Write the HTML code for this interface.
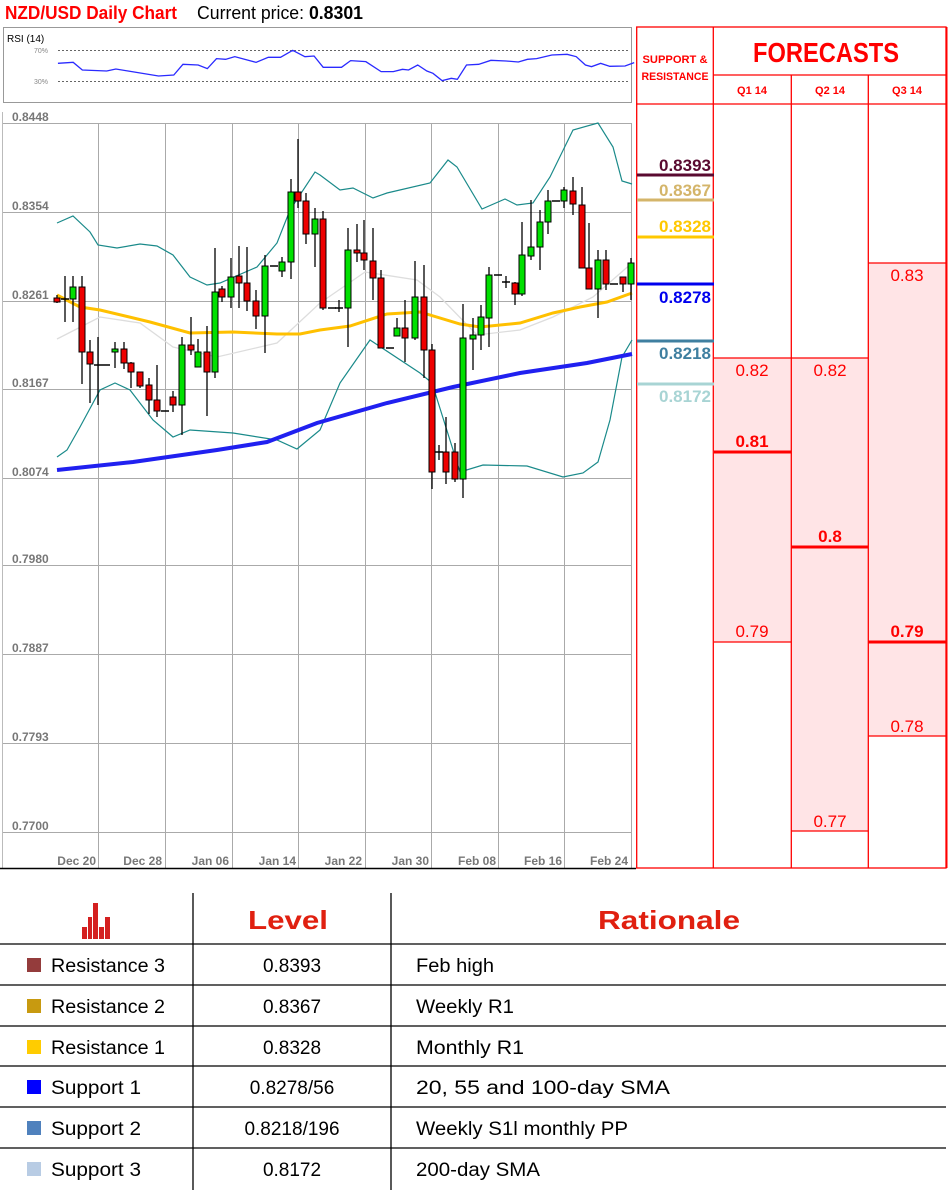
<!DOCTYPE html>
<html><head><meta charset="utf-8"><style>
html,body{margin:0;padding:0;background:#fff}
svg{display:block}
text{font-family:"Liberation Sans Narrow","Liberation Sans",sans-serif}
.ax{fill:#777;font-size:12px;font-weight:bold}
.tb{fill:#000;font-size:19px;font-family:"Liberation Sans",sans-serif}
.fr{fill:#f00;font-size:17px;font-family:"Liberation Sans",sans-serif}
</style></head><body>
<svg width="952" height="1190" viewBox="0 0 952 1190" xmlns="http://www.w3.org/2000/svg">
<text x="5" y="19" font-size="18" font-weight="bold" fill="#f00" textLength="172" lengthAdjust="spacingAndGlyphs">NZD/USD Daily Chart</text>
<text x="197" y="19" font-size="18" fill="#000" textLength="166" lengthAdjust="spacingAndGlyphs">Current price: <tspan font-weight="bold">0.8301</tspan></text>

<rect x="3.5" y="27.5" width="628" height="75" fill="#fff" stroke="#999"/>
<text x="7" y="42" font-size="10" fill="#000">RSI (14)</text>
<text x="34" y="53" font-size="7" fill="#888">70%</text>
<text x="34" y="84" font-size="7" fill="#888">30%</text>
<line x1="58" y1="50.5" x2="630" y2="50.5" stroke="#666" stroke-dasharray="2,2"/>
<line x1="58" y1="81.5" x2="630" y2="81.5" stroke="#666" stroke-dasharray="2,2"/>
<polyline fill="none" stroke="#2a2aff" stroke-width="1.3" transform="scale(0.6098,0.3333)" vector-effect="non-scaling-stroke" points="95,190 120,187 135,210 175,213 190,207 210,213 260,228 285,225 300,193 325,195 340,206 355,176 370,178 385,170 420,187 440,172 460,172 480,151 500,170 515,168 530,202 560,202 575,182 600,185 625,215 645,215 660,208 670,210 685,195 700,213 710,220 725,242 740,235 750,238 765,195 785,193 805,181 830,183 850,186 865,178 880,176 905,165 930,163 945,170 960,195 970,200 985,190 1000,199 1025,198 1040,188"/>

<line x1="2.5" y1="112" x2="2.5" y2="868" stroke="#bbb"/>
<g stroke="#aaa" stroke-width="1">
<line x1="3" y1="123.5" x2="632" y2="123.5"/>
<line x1="3" y1="212.5" x2="632" y2="212.5"/>
<line x1="3" y1="301.5" x2="632" y2="301.5"/>
<line x1="3" y1="389.5" x2="632" y2="389.5"/>
<line x1="3" y1="478.5" x2="632" y2="478.5"/>
<line x1="3" y1="565.5" x2="632" y2="565.5"/>
<line x1="3" y1="654.5" x2="632" y2="654.5"/>
<line x1="3" y1="743.5" x2="632" y2="743.5"/>
<line x1="3" y1="832.5" x2="632" y2="832.5"/>
<line x1="98.5" y1="123" x2="98.5" y2="868"/>
<line x1="165.5" y1="123" x2="165.5" y2="868"/>
<line x1="232.5" y1="123" x2="232.5" y2="868"/>
<line x1="298.5" y1="123" x2="298.5" y2="868"/>
<line x1="365.5" y1="123" x2="365.5" y2="868"/>
<line x1="431.5" y1="123" x2="431.5" y2="868"/>
<line x1="498.5" y1="123" x2="498.5" y2="868"/>
<line x1="564.5" y1="123" x2="564.5" y2="868"/>
<line x1="631.5" y1="123" x2="631.5" y2="868"/>
</g>
<line x1="0" y1="868.5" x2="636" y2="868.5" stroke="#000" stroke-width="1.5"/>
<g class="ax">
<text x="12" y="121">0.8448</text>
<text x="12" y="210">0.8354</text>
<text x="12" y="299">0.8261</text>
<text x="12" y="387">0.8167</text>
<text x="12" y="476">0.8074</text>
<text x="12" y="563">0.7980</text>
<text x="12" y="652">0.7887</text>
<text x="12" y="741">0.7793</text>
<text x="12" y="830">0.7700</text>
<g text-anchor="end">
<text x="96" y="865">Dec 20</text>
<text x="162" y="865">Dec 28</text>
<text x="229" y="865">Jan 06</text>
<text x="296" y="865">Jan 14</text>
<text x="362" y="865">Jan 22</text>
<text x="429" y="865">Jan 30</text>
<text x="496" y="865">Feb 08</text>
<text x="562" y="865">Feb 16</text>
<text x="628" y="865">Feb 24</text>
</g></g>

<polyline fill="none" stroke="#ddd" stroke-width="1.3" points="57,339 100,317 140,323 173,347 217,357 277,343 320,303 365,272 417,280 440,297 477,335 520,330 553,317 593,297 632,263"/>
<polyline fill="none" stroke="#1a8a8a" stroke-width="1.2" points="57,223 73,216 90,232 98,245 117,248 140,244 157,246 173,255 190,277 207,285 220,283 257,267 277,243 290,210 315,172 320,175 340,190 353,188 373,198 387,193 430,183 448,160 457,167 482,209 505,199 517,205 533,203 550,177 573,130 598,123 613,147 622,181 632,184"/>
<polyline fill="none" stroke="#1a8a8a" stroke-width="1.2" points="57,457 67,450 80,427 100,390 115,383 130,390 153,420 173,437 190,430 233,433 277,440 297,449 320,430 340,383 370,340 420,373 432,383 460,472 483,465 527,466 563,477 583,473 598,462 610,420 622,357 632,340"/>
<polyline fill="none" stroke="#2020f0" stroke-width="4" points="57,470 133,462 217,450 267,442 317,423 387,403 453,387 520,373 587,363 632,354"/>
<polyline fill="none" stroke="#ffc000" stroke-width="3" points="57,295 80,307 100,310 150,322 190,333 233,332 277,334 300,334 320,330 350,326 387,314 420,312 460,324 480,327 520,323 553,313 580,307 607,302 632,293"/>

<g stroke="#000" stroke-width="1">
<g stroke-width="1.3">
<line x1="57" y1="295" x2="57" y2="303"/><line x1="65" y1="276" x2="65" y2="322"/><line x1="73" y1="276" x2="73" y2="322"/><line x1="82" y1="276" x2="82" y2="384"/><line x1="90" y1="340" x2="90" y2="403"/><line x1="98" y1="337" x2="98" y2="405"/><line x1="115" y1="342" x2="115" y2="368"/><line x1="124" y1="342" x2="124" y2="369"/><line x1="131" y1="362" x2="131" y2="388"/><line x1="140" y1="372" x2="140" y2="388"/><line x1="149" y1="378" x2="149" y2="414"/><line x1="157" y1="365" x2="157" y2="417"/><line x1="173" y1="391" x2="173" y2="412"/><line x1="182" y1="337" x2="182" y2="435"/><line x1="191" y1="317" x2="191" y2="355"/><line x1="198" y1="339" x2="198" y2="367"/><line x1="207" y1="326" x2="207" y2="416"/><line x1="215" y1="248" x2="215" y2="378"/><line x1="222" y1="286" x2="222" y2="302"/><line x1="231" y1="258" x2="231" y2="308"/><line x1="239" y1="246" x2="239" y2="308"/><line x1="247" y1="247" x2="247" y2="311"/><line x1="256" y1="290" x2="256" y2="329"/><line x1="265" y1="255" x2="265" y2="353"/><line x1="282" y1="257" x2="282" y2="277"/><line x1="291" y1="179" x2="291" y2="279"/><line x1="298" y1="139" x2="298" y2="208"/><line x1="306" y1="193" x2="306" y2="244"/><line x1="315" y1="208" x2="315" y2="267"/><line x1="323" y1="211" x2="323" y2="310"/><line x1="339" y1="300" x2="339" y2="312"/><line x1="348" y1="228" x2="348" y2="347"/><line x1="357" y1="224" x2="357" y2="262"/><line x1="364" y1="220" x2="364" y2="270"/><line x1="373" y1="228" x2="373" y2="300"/><line x1="381" y1="270" x2="381" y2="348"/><line x1="397" y1="318" x2="397" y2="336"/><line x1="405" y1="300" x2="405" y2="362"/><line x1="415" y1="261" x2="415" y2="340"/><line x1="424" y1="265" x2="424" y2="378"/><line x1="432" y1="344" x2="432" y2="489"/><line x1="439" y1="445" x2="439" y2="460"/><line x1="446" y1="417" x2="446" y2="484"/><line x1="455" y1="443" x2="455" y2="482"/><line x1="463" y1="304" x2="463" y2="498"/><line x1="473" y1="318" x2="473" y2="370"/><line x1="481" y1="305" x2="481" y2="350"/><line x1="489" y1="267" x2="489" y2="347"/><line x1="506" y1="276" x2="506" y2="288"/><line x1="515" y1="282" x2="515" y2="305"/><line x1="522" y1="222" x2="522" y2="296"/><line x1="531" y1="200" x2="531" y2="260"/><line x1="540" y1="210" x2="540" y2="270"/><line x1="548" y1="190" x2="548" y2="234"/><line x1="564" y1="187" x2="564" y2="208"/><line x1="573" y1="177" x2="573" y2="215"/><line x1="582" y1="187" x2="582" y2="268"/><line x1="589" y1="223" x2="589" y2="289"/><line x1="598" y1="250" x2="598" y2="318"/><line x1="606" y1="250" x2="606" y2="290"/><line x1="623" y1="277" x2="623" y2="292"/><line x1="631" y1="258" x2="631" y2="300"/>
</g>
<g stroke-width="1.5">
<line x1="61" y1="299" x2="69" y2="299"/><line x1="94" y1="365" x2="102" y2="365"/><line x1="102" y1="365" x2="110" y2="365"/><line x1="161" y1="411" x2="169" y2="411"/><line x1="270" y1="266" x2="278" y2="266"/><line x1="328" y1="308" x2="336" y2="308"/><line x1="335" y1="308" x2="343" y2="308"/><line x1="386" y1="348" x2="394" y2="348"/><line x1="435" y1="452" x2="443" y2="452"/><line x1="494" y1="275" x2="502" y2="275"/><line x1="502" y1="282" x2="510" y2="282"/><line x1="552" y1="201" x2="560" y2="201"/><line x1="610" y1="284" x2="618" y2="284"/>
</g>
<g fill="#ee0000">
<rect x="54" y="298" width="6" height="4"/><rect x="79" y="287" width="6" height="65"/><rect x="87" y="352" width="6" height="12"/><rect x="121" y="349" width="6" height="14"/><rect x="128" y="363" width="6" height="9"/><rect x="137" y="372" width="6" height="14"/><rect x="146" y="385" width="6" height="15"/><rect x="154" y="400" width="6" height="11"/><rect x="170" y="397" width="6" height="8"/><rect x="188" y="345" width="6" height="5"/><rect x="204" y="352" width="6" height="20"/><rect x="219" y="289" width="6" height="8"/><rect x="236" y="276" width="6" height="7"/><rect x="244" y="283" width="6" height="18"/><rect x="253" y="301" width="6" height="15"/><rect x="295" y="192" width="6" height="9"/><rect x="303" y="201" width="6" height="33"/><rect x="320" y="219" width="6" height="89"/><rect x="354" y="250" width="6" height="3"/><rect x="361" y="253" width="6" height="7"/><rect x="370" y="261" width="6" height="17"/><rect x="378" y="278" width="6" height="70"/><rect x="402" y="328" width="6" height="10"/><rect x="421" y="297" width="6" height="53"/><rect x="429" y="350" width="6" height="122"/><rect x="443" y="452" width="6" height="20"/><rect x="452" y="452" width="6" height="27"/><rect x="512" y="283" width="6" height="11"/><rect x="570" y="191" width="6" height="13"/><rect x="579" y="205" width="6" height="63"/><rect x="586" y="268" width="6" height="21"/><rect x="603" y="260" width="6" height="24"/><rect x="620" y="277" width="6" height="7"/>
</g>
<g fill="#00e000">
<rect x="70" y="287" width="6" height="12"/><rect x="112" y="349" width="6" height="3"/><rect x="179" y="345" width="6" height="60"/><rect x="195" y="352" width="6" height="15"/><rect x="212" y="292" width="6" height="80"/><rect x="228" y="277" width="6" height="20"/><rect x="262" y="266" width="6" height="50"/><rect x="279" y="262" width="6" height="9"/><rect x="288" y="192" width="6" height="70"/><rect x="312" y="219" width="6" height="15"/><rect x="345" y="250" width="6" height="58"/><rect x="394" y="328" width="6" height="8"/><rect x="412" y="297" width="6" height="41"/><rect x="460" y="338" width="6" height="141"/><rect x="470" y="335" width="6" height="4"/><rect x="478" y="317" width="6" height="18"/><rect x="486" y="275" width="6" height="43"/><rect x="519" y="255" width="6" height="39"/><rect x="528" y="247" width="6" height="9"/><rect x="537" y="222" width="6" height="25"/><rect x="545" y="201" width="6" height="21"/><rect x="561" y="190" width="6" height="11"/><rect x="595" y="260" width="6" height="29"/><rect x="628" y="263" width="6" height="21"/>
</g>
</g>

<rect x="714" y="358" width="77" height="284" fill="#ffe4e6"/>
<rect x="791" y="358" width="77" height="473" fill="#ffe4e6"/>
<rect x="868" y="263" width="78" height="473" fill="#ffe4e6"/>
<g stroke="#f00" stroke-width="1.3" fill="none">
<rect x="636.7" y="27" width="309.3" height="841"/>
<line x1="713.3" y1="27" x2="713.3" y2="868"/>
<line x1="791.3" y1="75" x2="791.3" y2="868"/>
<line x1="868.3" y1="75" x2="868.3" y2="868"/>
<line x1="713" y1="75" x2="946" y2="75"/>
<line x1="636" y1="104" x2="946" y2="104"/>
<line x1="714" y1="358" x2="868" y2="358"/>
<line x1="714" y1="642" x2="791" y2="642"/>
<line x1="791" y1="831" x2="868" y2="831"/>
<line x1="868" y1="263" x2="946" y2="263"/>
<line x1="868" y1="736" x2="946" y2="736"/>
</g>
<g stroke="#f00" stroke-width="3">
<line x1="714" y1="452" x2="791" y2="452"/>
<line x1="791" y1="547" x2="868" y2="547"/>
<line x1="868" y1="642" x2="946" y2="642"/>
</g>
<line x1="946.5" y1="27" x2="946.5" y2="868" stroke="#f00" stroke-width="2"/>
<text x="826" y="62" text-anchor="middle" font-size="28" font-weight="bold" fill="#f00" textLength="146" lengthAdjust="spacingAndGlyphs">FORECASTS</text>
<text x="675" y="63" text-anchor="middle" font-size="11" font-weight="bold" fill="#f00" textLength="65" lengthAdjust="spacingAndGlyphs">SUPPORT &amp;</text>
<text x="675" y="80" text-anchor="middle" font-size="11" font-weight="bold" fill="#f00" textLength="67" lengthAdjust="spacingAndGlyphs">RESISTANCE</text>
<g font-size="11" font-weight="bold" fill="#f00" text-anchor="middle">
<text x="752" y="94">Q1 14</text><text x="830" y="94">Q2 14</text><text x="907" y="94">Q3 14</text>
</g>
<g class="fr" text-anchor="middle">
<text x="752" y="376">0.82</text><text x="830" y="376">0.82</text><text x="907" y="281">0.83</text>
<text x="752" y="637">0.79</text><text x="830" y="827">0.77</text><text x="907" y="732">0.78</text>
<text x="752" y="447" font-weight="bold">0.81</text><text x="830" y="542" font-weight="bold">0.8</text><text x="907" y="637" font-weight="bold">0.79</text>
</g>
<g stroke-width="3">
<line x1="637" y1="175" x2="714" y2="175" stroke="#5a0a30"/>
<line x1="637" y1="200" x2="714" y2="200" stroke="#d4b56a"/>
<line x1="637" y1="237" x2="714" y2="237" stroke="#ffc800"/>
<line x1="637" y1="284" x2="714" y2="284" stroke="#0000ee"/>
<line x1="637" y1="341" x2="714" y2="341" stroke="#3f7fa0"/>
<line x1="637" y1="384" x2="714" y2="384" stroke="#a8d4d4"/>
</g>
<g font-size="17" font-weight="bold" text-anchor="end" font-family="Liberation Sans,sans-serif">
<text x="711" y="171" fill="#5a0a30">0.8393</text>
<text x="711" y="196" fill="#d4b56a">0.8367</text>
<text x="711" y="232" fill="#ffc800">0.8328</text>
<text x="711" y="303" fill="#0000ee">0.8278</text>
<text x="711" y="359" fill="#3f7fa0">0.8218</text>
<text x="711" y="402" fill="#a8d4d4">0.8172</text>
</g>

<g stroke="#000" stroke-width="1.3">
<line x1="193" y1="893" x2="193" y2="1190"/>
<line x1="391" y1="893" x2="391" y2="1190"/>
<line x1="0" y1="944" x2="946" y2="944"/>
<line x1="0" y1="985" x2="946" y2="985"/>
<line x1="0" y1="1026" x2="946" y2="1026"/>
<line x1="0" y1="1066" x2="946" y2="1066"/>
<line x1="0" y1="1107" x2="946" y2="1107"/>
<line x1="0" y1="1148" x2="946" y2="1148"/>
</g>
<g fill="#d42020">
<rect x="82" y="927" width="5" height="12"/><rect x="88" y="917" width="4" height="22"/><rect x="93" y="903" width="5" height="36"/><rect x="99" y="927" width="5" height="12"/><rect x="105" y="917" width="5" height="22"/>
</g>
<text x="288" y="929" text-anchor="middle" font-size="26" font-weight="bold" fill="#e02010" font-family="Liberation Sans,sans-serif" textLength="80" lengthAdjust="spacingAndGlyphs">Level</text>
<text x="669" y="929" text-anchor="middle" font-size="26" font-weight="bold" fill="#e02010" font-family="Liberation Sans,sans-serif" textLength="142" lengthAdjust="spacingAndGlyphs">Rationale</text>
<rect x="27" y="958" width="14" height="14" fill="#943c3c"/>
<rect x="27" y="999" width="14" height="14" fill="#c89a10"/>
<rect x="27" y="1040" width="14" height="14" fill="#ffcc00"/>
<rect x="27" y="1080" width="14" height="14" fill="#0000ff"/>
<rect x="27" y="1121" width="14" height="14" fill="#4f81bd"/>
<rect x="27" y="1162" width="14" height="14" fill="#b8cce4"/>
<g class="tb">
<text x="51" y="972" textLength="114" lengthAdjust="spacingAndGlyphs">Resistance 3</text>
<text x="51" y="1013" textLength="114" lengthAdjust="spacingAndGlyphs">Resistance 2</text>
<text x="51" y="1054" textLength="114" lengthAdjust="spacingAndGlyphs">Resistance 1</text>
<text x="51" y="1094" textLength="90" lengthAdjust="spacingAndGlyphs">Support 1</text>
<text x="51" y="1135" textLength="90" lengthAdjust="spacingAndGlyphs">Support 2</text>
<text x="51" y="1176" textLength="90" lengthAdjust="spacingAndGlyphs">Support 3</text>
<g text-anchor="middle">
<text x="292" y="972">0.8393</text><text x="292" y="1013">0.8367</text><text x="292" y="1054">0.8328</text>
<text x="292" y="1094">0.8278/56</text><text x="292" y="1135">0.8218/196</text><text x="292" y="1176">0.8172</text>
</g>
<text x="416" y="972" textLength="78" lengthAdjust="spacingAndGlyphs">Feb high</text>
<text x="416" y="1013" textLength="98" lengthAdjust="spacingAndGlyphs">Weekly R1</text>
<text x="416" y="1054" textLength="108" lengthAdjust="spacingAndGlyphs">Monthly R1</text>
<text x="416" y="1094" textLength="254" lengthAdjust="spacingAndGlyphs">20, 55 and 100-day SMA</text>
<text x="416" y="1135" textLength="212" lengthAdjust="spacingAndGlyphs">Weekly S1l monthly PP</text>
<text x="416" y="1176" textLength="124" lengthAdjust="spacingAndGlyphs">200-day SMA</text>
</g>
</svg>
</body></html>
